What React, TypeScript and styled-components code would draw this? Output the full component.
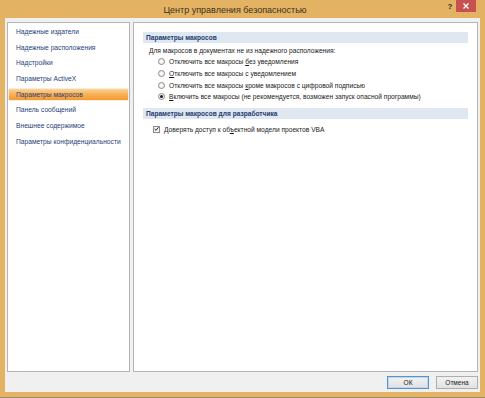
import styled, { createGlobalStyle } from "styled-components";

const GlobalStyle = createGlobalStyle`
  html, body {
    margin: 0;
    padding: 0;
    background: #e4b263;
  }
  body {
    font-family: "Liberation Sans", Arial, sans-serif;
  }
`;

const Window = styled.div`
  width: 485px;
  height: 398px;
  box-sizing: border-box;
  background: #e4b263;
  padding: 0 5px 5px 5px;
  display: flex;
  flex-direction: column;
  border-bottom: 1px solid #9a8a6a;
`;

const TitleBar = styled.div`
  height: 18px;
  display: flex;
  align-items: flex-start;
`;

const Title = styled.div`
  flex: 1;
  text-align: center;
  font-size: 9px;
  color: #3a3220;
  line-height: 20px;
  padding-left: 20px;
`;

const HelpBtn = styled.div`
  width: 10px;
  font-size: 8px;
  font-weight: bold;
  color: #2c2c2c;
  line-height: 14px;
  text-align: center;
`;

const CloseBtn = styled.div`
  width: 20px;
  height: 12px;
  margin-left: 1px;
  margin-right: 4px;
  background: #c75050;
  display: flex;
  align-items: center;
  justify-content: center;
`;

const Client = styled.div`
  flex: 1;
  background: #f0f0f0;
  padding: 4px 2px 0 2px;
  display: flex;
  flex-direction: column;
`;

const Panels = styled.div`
  height: 350px;
  display: flex;
  gap: 3px;
`;

const Nav = styled.ul`
  width: 123px;
  box-sizing: border-box;
  margin: 0;
  padding: 3px 1px 0 1px;
  list-style: none;
  background: #fff;
  border: 1px solid #b5b5b5;
`;

const NavItem = styled.li<{ $active?: boolean }>`
  height: 11px;
  margin-bottom: 4.7px;
  padding-left: 7px;
  font-size: 6.7px;
  line-height: 11px;
  color: #1f3f7a;
  white-space: nowrap;
  background: ${(p) =>
    p.$active
      ? "linear-gradient(to bottom, #fcd49a 0%, #f9b35a 45%, #f39a32 100%)"
      : "transparent"};
  box-shadow: ${(p) => (p.$active ? "0 0 1px #e0902c" : "none")};
`;

const Content = styled.div`
  flex: 1;
  box-sizing: border-box;
  background: #fff;
  border: 1px solid #b5b5b5;
  padding: 9px 9px 0 9px;
`;

const SectionHead = styled.div`
  height: 11px;
  background: #dfe8f1;
  color: #1e3a6e;
  font-weight: bold;
  font-size: 6.6px;
  line-height: 11px;
  padding-left: 3px;
`;

const Body = styled.div<{ $pt: number; $pb: number }>`
  padding: ${(p) => p.$pt}px 0 ${(p) => p.$pb}px 6px;
  display: flex;
  flex-direction: column;
  gap: 1px;
`;

const Line = styled.div<{ $indent?: number }>`
  height: 10.6px;
  display: flex;
  align-items: center;
  gap: 4px;
  padding-left: ${(p) => p.$indent ?? 0}px;
  font-size: 6.65px;
  color: #1b1b1b;
  white-space: nowrap;
`;

const Radio = styled.span<{ $on?: boolean }>`
  width: 7px;
  height: 7px;
  box-sizing: border-box;
  border-radius: 50%;
  border: 1px solid #8a8a8a;
  background: radial-gradient(circle, #fff 0%, #e8e8e8 100%);
  display: flex;
  align-items: center;
  justify-content: center;
  &::after {
    content: "";
    width: 3px;
    height: 3px;
    border-radius: 50%;
    background: ${(p) => (p.$on ? "#1a1a1a" : "transparent")};
  }
`;

const Check = styled.span`
  width: 7px;
  height: 7px;
  box-sizing: border-box;
  border: 1px solid #8a8a8a;
  background: #f4f4f4;
  display: flex;
  align-items: center;
  justify-content: center;
`;

const Key = styled.span`
  text-decoration: underline;
`;

const Footer = styled.div`
  flex: 1;
  display: flex;
  justify-content: flex-end;
  align-items: flex-start;
  padding-top: 4px;
  gap: 7px;
`;

const Button = styled.button<{ $default?: boolean }>`
  width: 42px;
  height: 13px;
  padding: 0;
  font-family: "Liberation Sans", Arial, sans-serif;
  font-size: 6.5px;
  color: #222;
  border: 1px solid ${(p) => (p.$default ? "#5a93c9" : "#adadad")};
  background: linear-gradient(to bottom, #f2f2f2, #e2e2e2);
  box-shadow: ${(p) => (p.$default ? "inset 0 0 0 1px #bcd7ef" : "none")};
`;

const navItems = [
  "Надежные издатели",
  "Надежные расположения",
  "Надстройки",
  "Параметры ActiveX",
  "Параметры макросов",
  "Панель сообщений",
  "Внешнее содержимое",
  "Параметры конфиденциальности",
];

export default function App() {
  return (
    <>
      <GlobalStyle />
      <Window>
        <TitleBar>
          <Title>Центр управления безопасностью</Title>
          <HelpBtn>?</HelpBtn>
          <CloseBtn>
            <svg width="6" height="6" viewBox="0 0 6 6">
              <path d="M0.5 0.5 L5.5 5.5 M5.5 0.5 L0.5 5.5" stroke="#fff" strokeWidth="1.4" />
            </svg>
          </CloseBtn>
        </TitleBar>
        <Client>
          <Panels>
            <Nav>
              {navItems.map((item) => (
                <NavItem key={item} $active={item === "Параметры макросов"}>
                  {item}
                </NavItem>
              ))}
            </Nav>
            <Content>
              <SectionHead>Параметры макросов</SectionHead>
              <Body $pt={2} $pb={6}>
                <Line>Для макросов в документах не из надежного расположения:</Line>
                <Line $indent={9}>
                  <Radio />
                  <span>
                    Отключить все макросы <Key>б</Key>ез уведомления
                  </span>
                </Line>
                <Line $indent={9}>
                  <Radio />
                  <span>
                    <Key>О</Key>тключить все макросы с уведомлением
                  </span>
                </Line>
                <Line $indent={9}>
                  <Radio />
                  <span>
                    Отключить все макросы <Key>к</Key>роме макросов с цифровой подписью
                  </span>
                </Line>
                <Line $indent={9}>
                  <Radio $on />
                  <span>
                    <Key>В</Key>ключить все макросы (не рекомендуется, возможен запуск опасной программы)
                  </span>
                </Line>
              </Body>
              <SectionHead>Параметры макросов для разработчика</SectionHead>
              <Body $pt={5} $pb={0}>
                <Line $indent={4}>
                  <Check>
                    <svg width="6" height="6" viewBox="0 0 6 6">
                      <path d="M0.8 3 L2.4 4.6 L5.3 0.9" stroke="#222" strokeWidth="1.2" fill="none" />
                    </svg>
                  </Check>
                  <span>
                    Доверять доступ к об<Key>ъ</Key>ектной модели проектов VBA
                  </span>
                </Line>
              </Body>
            </Content>
          </Panels>
          <Footer>
            <Button $default>ОК</Button>
            <Button>Отмена</Button>
          </Footer>
        </Client>
      </Window>
    </>
  );
}
